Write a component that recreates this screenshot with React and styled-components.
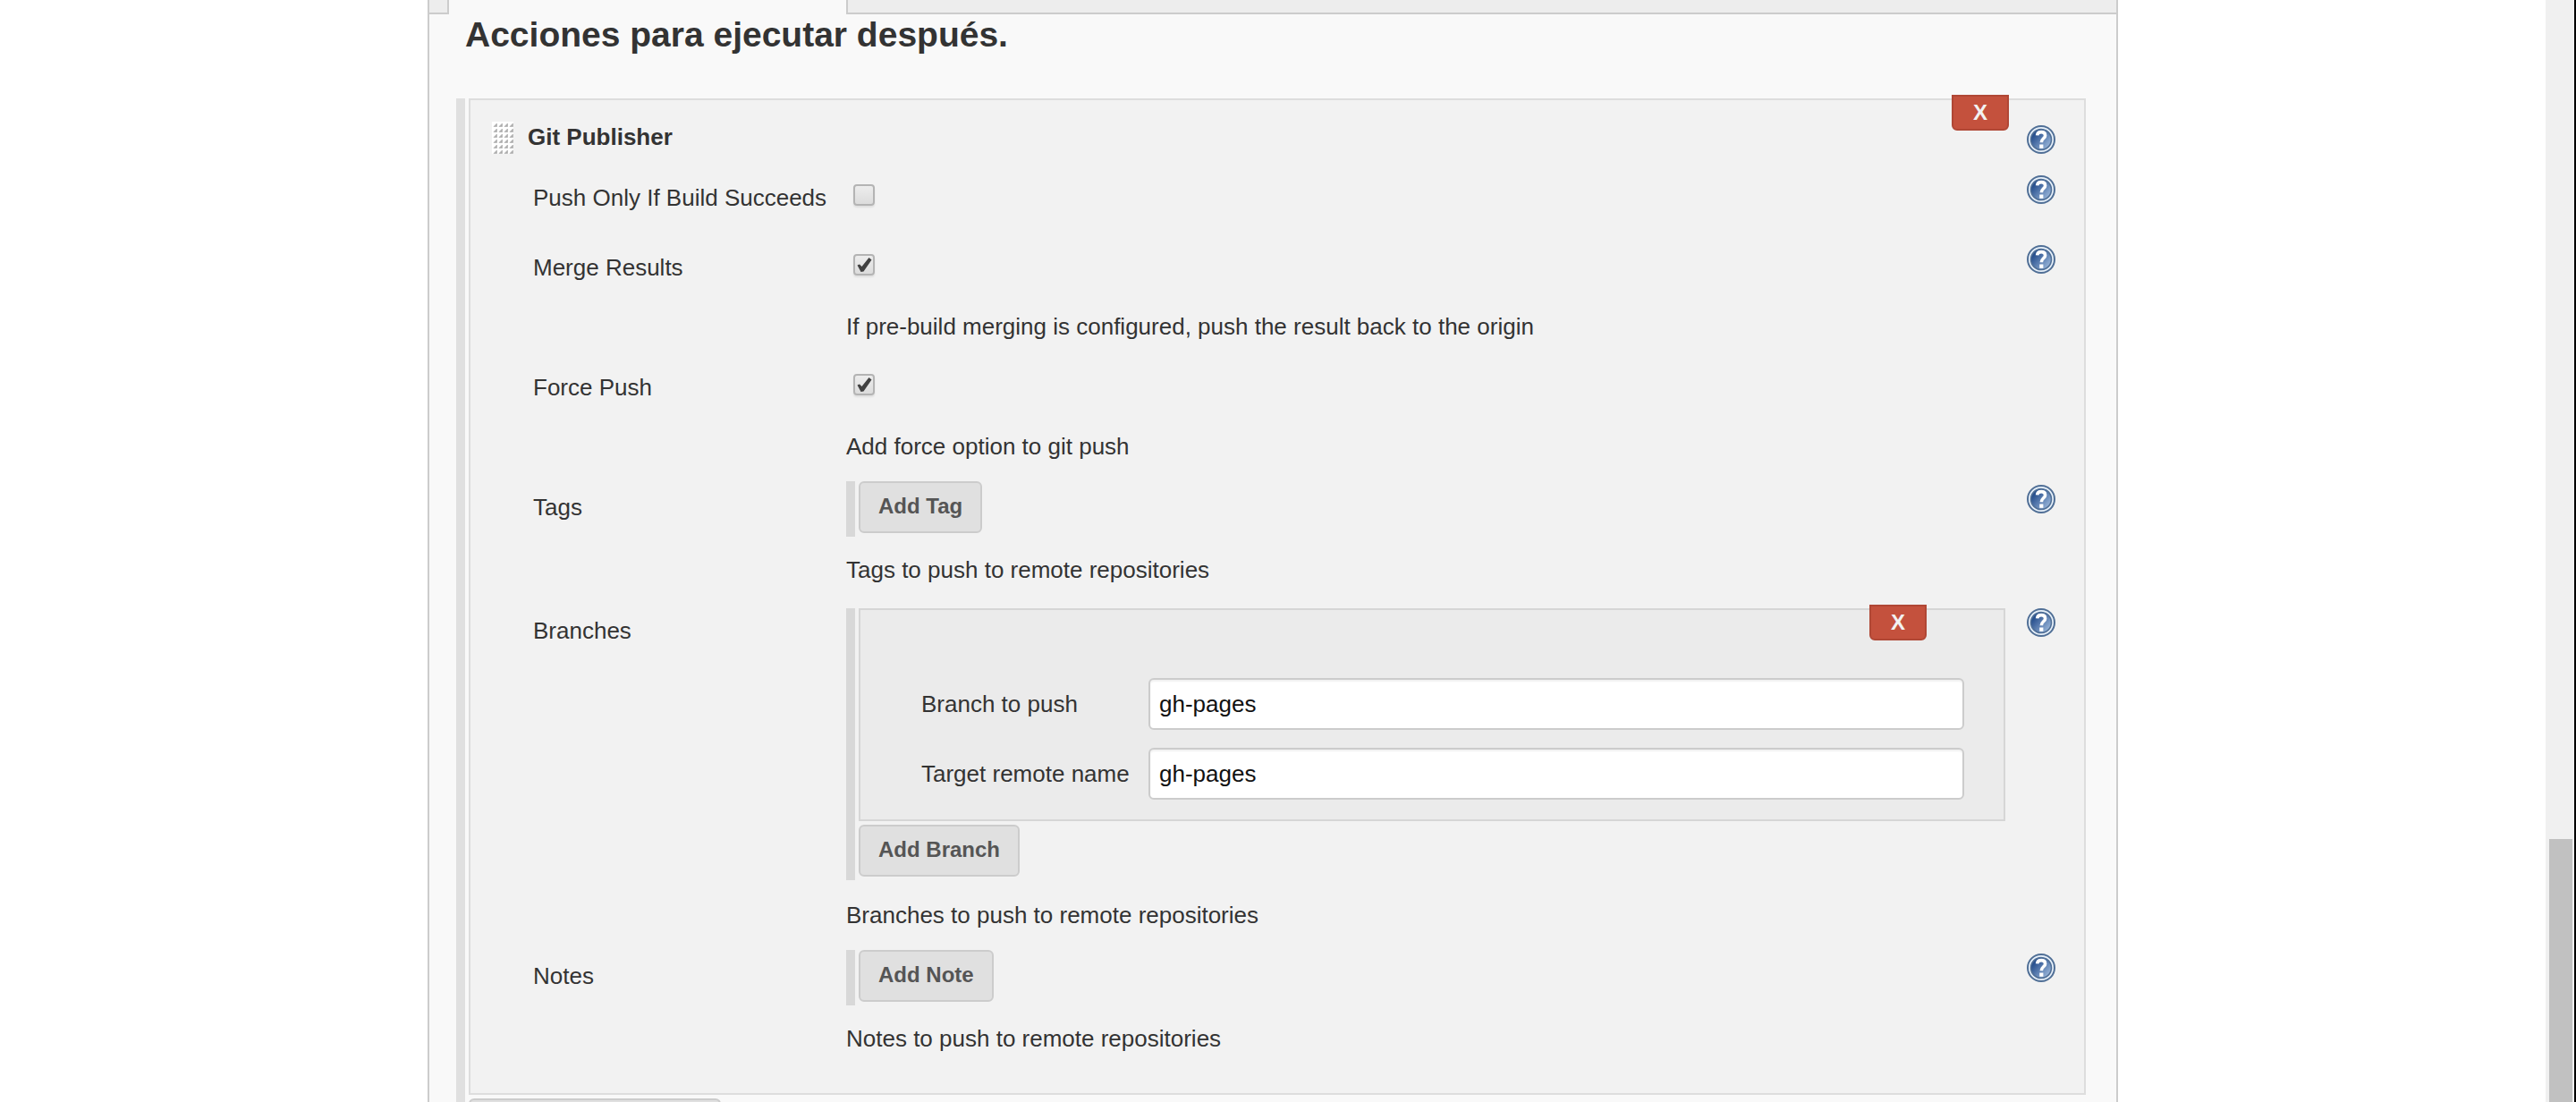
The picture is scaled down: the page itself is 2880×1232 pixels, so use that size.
import React from "react";
import styled, { createGlobalStyle } from "styled-components";

const Global = createGlobalStyle`
  * { box-sizing: border-box; }
  body { margin: 0; background: #fff; overflow: hidden; }
  body, input, button {
    font-family: "Liberation Sans", Arial, Helvetica, sans-serif;
    font-size: 26px;
    line-height: 30px;
    color: #333;
  }
`;

const Window = styled.div`
  display: flex;
  height: 100vh;
  overflow: hidden;
`;
const Page = styled.main`
  flex: 1;
  min-width: 0;
`;
const Scrollbar = styled.div`
  display: flex;
  flex-direction: column;
  width: 34px;
  padding: 0 2px 0 4px;
  background: #f0f0f0;
  border-right: 2px solid #000;
`;
const Spacer = styled.div`
  flex: 938;
`;
const Thumb = styled.div`
  flex: 294;
  background: #c1c1c1;
`;

const Panel = styled.div`
  width: 100%;
  max-width: 1890px;
  margin: 0 auto;
  min-height: 100vh;
  background: #f9f9f9;
  border: solid #ccc;
  border-width: 0 2px;
`;
const TabStrip = styled.div`
  display: grid;
  grid-template-columns: 22px 444px 1fr;
  height: 16px;
`;
const TabEdge = styled.div`
  background: #ededed;
  border: solid #ccc;
  border-width: ${(p) => (p.$first ? "0 2px 2px 0" : "0 0 2px 2px")};
`;
const Heading = styled.h2`
  margin: 0;
  padding: 0 40px 48px;
  font-size: 39px;
  line-height: 46px;
  font-weight: bold;
`;

const Repeatable = styled.div`
  border-left: 10px solid ${(p) => (p.$outer ? "#e0e0e0" : "#d8d8d8")};
  padding-left: 4px;
  padding-bottom: 4px;
  margin: ${(p) => (p.$outer ? "0 34px 0 30px" : p.$filled ? "4px 0 2px" : "0")};
`;
const Chunk = styled.section`
  position: relative;
  margin-bottom: 4px;
  background: ${(p) => (p.$inner ? "#ebebeb" : "#f2f2f2")};
  border: 2px solid ${(p) => (p.$inner ? "#d6d6d6" : "#ddd")};
  padding: ${(p) => (p.$inner ? "76px 44px 22px 68px" : "24px 32px 22px 24px")};
`;
const DeleteButton = styled.button`
  position: absolute;
  top: -6px;
  right: ${(p) => (p.$inner ? "86px" : "84px")};
  width: 64px;
  height: 40px;
  padding: 0;
  background: #c4513d;
  border: 2px solid #b04735;
  border-radius: 0 0 6px 6px;
  color: #f2f2f2;
  font-size: 24px;
  line-height: 34px;
  font-weight: bold;
`;
const ChunkHeader = styled.header`
  display: flex;
  align-items: flex-start;
  height: 56px;
`;
const Title = styled.strong`
  flex: 1;
  padding: 2px 0 0 16px;
`;
const HelpButton = styled.button`
  display: block;
  width: 32px;
  height: 32px;
  margin-top: 4px;
  padding: 0;
  border: 0;
  background: none;
  svg { display: block; }
`;
const Row = styled.div`
  display: grid;
  grid-template-columns: 326px 1fr 32px;
  column-gap: 24px;
  padding-left: 46px;
`;
const LabelCell = styled.div`
  padding-top: 14px;
  white-space: nowrap;
`;
const Setting = styled.div`
  display: flow-root;
  min-height: 58px;
  margin-bottom: 20px;
`;
const Description = styled.div`
  padding: 2px 0 24px;
`;

const CheckBox = styled.span`
  display: grid;
  width: 24px;
  margin-left: 8px;
  padding-top: 14px;
  > * { grid-area: 1 / 1; }
  svg { pointer-events: none; }
`;
const CheckInput = styled.input`
  appearance: none;
  width: 24px;
  height: 24px;
  margin: 0;
  border: 2px solid #b4b4b4;
  border-radius: 4px;
  background: linear-gradient(#ededed, #dcdcdc);
  box-shadow: 0 2px 2px rgba(0, 0, 0, 0.08);
`;
const Button = styled.button`
  display: block;
  height: 58px;
  min-width: ${(p) => (p.$wide ? "282px" : "0")};
  padding: 0 20px 2px;
  background: #e0e0e0;
  border: 2px solid #ccc;
  border-radius: 6px;
  color: #555;
  font-size: 24px;
  font-weight: bold;
`;
const Field = styled.div`
  display: grid;
  grid-template-columns: 254px 1fr;
  align-items: center;
  & + & { margin-top: 20px; }
`;
const TextInput = styled.input`
  width: 100%;
  height: 58px;
  padding: 0 10px;
  border: 2px solid #ccc;
  border-radius: 6px;
  background: #fff;
  box-shadow: inset 0 2px 2px rgba(0, 0, 0, 0.06);
  color: #111;
`;

function Grip() {
  const dots = [];
  for (let r = 0; r < 6; r++)
    for (let c = 0; c < 4; c++)
      dots.push(<path key={`${r}-${c}`} d={`M${c * 6 + 5.5} ${r * 6 + 2}v3.5h-3.5z`} fill="#aaa" stroke="#b4b4b4" strokeWidth="0.8" />);
  return (
    <svg width="24" height="36" viewBox="0 0 24 36">
      <rect width="24" height="36" fill="#fff" />
      {dots}
    </svg>
  );
}

function Help() {
  return (
    <HelpButton type="button">
      <svg width="32" height="32" viewBox="0 0 32 32">
        <defs>
          <linearGradient id="orb" x1="0.1" y1="0.2" x2="0.9" y2="0.9">
            <stop offset="0.1" stopColor="#2a5290" />
            <stop offset="1" stopColor="#9db9dc" />
          </linearGradient>
        </defs>
        <circle cx="16" cy="16" r="15" fill="#e8f1fa" stroke="#506f96" strokeWidth="2" />
        <circle cx="16" cy="16" r="11.5" fill="url(#orb)" stroke="#506f96" strokeWidth="1.6" />
        <path d="M11.6 11.400C11.8 9 13.600 7.600 16.200 7.600C19 7.600 20.600 9.200 20.600 11.400C20.600 14.800 16.300 14.800 16.300 19.200" fill="none" stroke="#fff" strokeWidth="3.600" />
        <rect x="14.200" y="21.500" width="4.200" height="4.300" fill="#fff" />
      </svg>
    </HelpButton>
  );
}

function Check({ id, checked }) {
  return (
    <CheckBox>
      <CheckInput id={id} type="checkbox" defaultChecked={checked} />
      {checked && (
        <svg width="24" height="24" viewBox="0 0 24 24">
          <path d="M4.500 12.500L7 11.500L9.500 14L17.500 4L20.500 6.500L11.500 19.500L8.500 20Z" fill="#404040" />
        </svg>
      )}
    </CheckBox>
  );
}

function Entry({ label, id, description, help = true, children }) {
  return (
    <Row>
      <LabelCell>{id ? <label htmlFor={id}>{label}</label> : label}</LabelCell>
      <div>
        <Setting>{children}</Setting>
        {description && <Description>{description}</Description>}
      </div>
      {help && <Help />}
    </Row>
  );
}

function TextField({ id, label, value }) {
  return (
    <Field>
      <label htmlFor={id}>{label}</label>
      <TextInput id={id} type="text" defaultValue={value} />
    </Field>
  );
}

export default function App() {
  return (
    <Window>
      <Global />
      <Page>
        <Panel>
          <TabStrip>
            <TabEdge $first />
            <span />
            <TabEdge />
          </TabStrip>
          <Heading>Acciones para ejecutar después.</Heading>
          <Repeatable $outer>
            <Chunk>
              <DeleteButton type="button">X</DeleteButton>
              <ChunkHeader>
                <Grip />
                <Title>Git Publisher</Title>
                <Help />
              </ChunkHeader>
              <Entry id="only-success" label="Push Only If Build Succeeds">
                <Check id="only-success" />
              </Entry>
              <Entry id="merge" label="Merge Results" description="If pre-build merging is configured, push the result back to the origin">
                <Check id="merge" checked />
              </Entry>
              <Entry id="force" label="Force Push" help={false} description="Add force option to git push">
                <Check id="force" checked />
              </Entry>
              <Entry label="Tags" description="Tags to push to remote repositories">
                <Repeatable>
                  <Button type="button">Add Tag</Button>
                </Repeatable>
              </Entry>
              <Entry label="Branches" description="Branches to push to remote repositories">
                <Repeatable $filled>
                  <Chunk $inner>
                    <DeleteButton type="button" $inner>X</DeleteButton>
                    <TextField id="branch" label="Branch to push" value="gh-pages" />
                    <TextField id="remote" label="Target remote name" value="gh-pages" />
                  </Chunk>
                  <Button type="button">Add Branch</Button>
                </Repeatable>
              </Entry>
              <Entry label="Notes" description="Notes to push to remote repositories">
                <Repeatable>
                  <Button type="button">Add Note</Button>
                </Repeatable>
              </Entry>
            </Chunk>
            <Button type="button" $wide />
          </Repeatable>
        </Panel>
      </Page>
      <Scrollbar>
        <Spacer />
        <Thumb />
      </Scrollbar>
    </Window>
  );
}
